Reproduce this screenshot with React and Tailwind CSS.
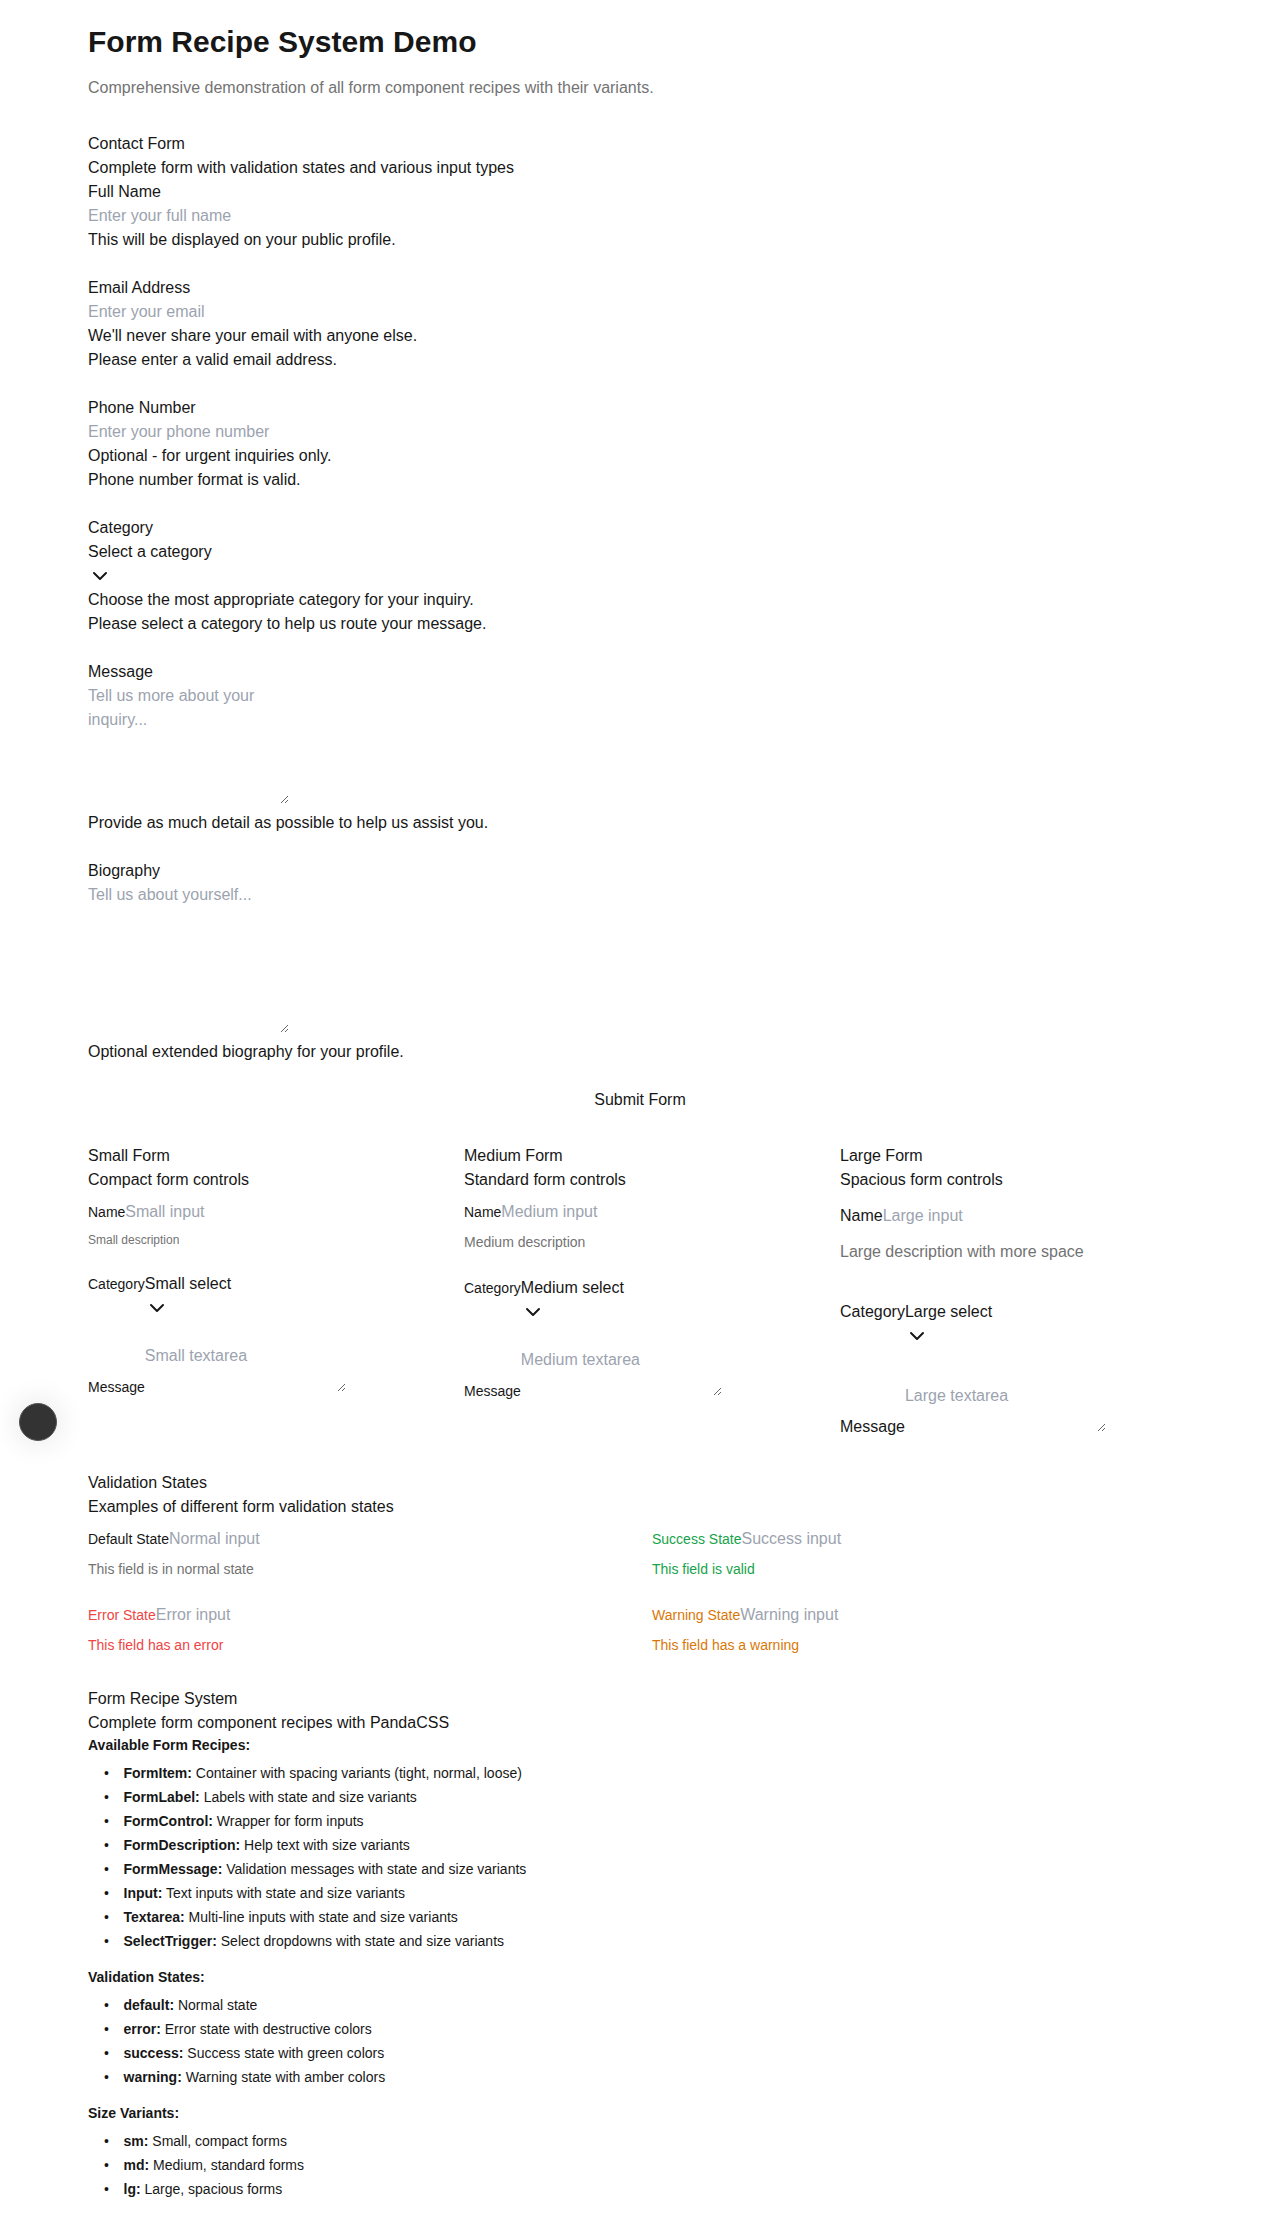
import { ChevronDown } from "lucide-react";

const ph = "outline-none placeholder:text-[#9ca3af]";

function SelectTrigger({ children }) {
  return (
    <button type="button" className="text-left">
      <span>{children}</span>
      <ChevronDown className="block" size={24} />
    </button>
  );
}

function ContactItem({ label, children, description, message }) {
  return (
    <div>
      <label className="block">{label}</label>
      <div>{children}</div>
      {description && <p>{description}</p>}
      {message && <p>{message}</p>}
    </div>
  );
}

function SizeForm({ title, subtitle, size }) {
  const label = size === "lg" ? "text-base" : "text-sm";
  const desc =
    size === "sm" ? "text-xs" : size === "md" ? "text-sm" : "text-base";
  const first = size === "lg" ? "mt-3" : "mt-2";
  const gap = size === "lg" ? "mt-9" : "mt-6";
  const name = size === "sm" ? "Small" : size === "md" ? "Medium" : "Large";
  const descText =
    size === "sm"
      ? "Small description"
      : size === "md"
      ? "Medium description"
      : "Large description with more space";

  return (
    <div>
      <div>{title}</div>
      <div>{subtitle}</div>
      <div className={first}>
        <label className={label}>Name</label>
        <input className={ph} placeholder={`${name} input`} />
        <p className={`${first} ${desc} text-[#737373]`}>{descText}</p>
      </div>
      <div className={gap}>
        <label className={label}>Category</label>
        <SelectTrigger>{name} select</SelectTrigger>
      </div>
      <div className={gap}>
        <label className={label}>Message</label>
        <textarea className={ph} placeholder={`${name} textarea`} />
      </div>
    </div>
  );
}

function StateItem({ label, placeholder, message, tone }) {
  return (
    <div className="space-y-2">
      <div>
        <label className={`text-sm ${tone.label}`}>{label}</label>
        <input className={ph} placeholder={placeholder} />
      </div>
      <p className={`text-sm ${tone.msg}`}>{message}</p>
    </div>
  );
}

const tones = {
  default: { label: "", msg: "text-[#737373]" },
  success: { label: "text-[#16a34a]", msg: "text-[#16a34a]" },
  error: { label: "text-[#ef4444]", msg: "text-[#ef4444]" },
  warning: { label: "text-[#d97706]", msg: "text-[#d97706]" },
};

const recipes = [
  ["FormItem:", "Container with spacing variants (tight, normal, loose)"],
  ["FormLabel:", "Labels with state and size variants"],
  ["FormControl:", "Wrapper for form inputs"],
  ["FormDescription:", "Help text with size variants"],
  ["FormMessage:", "Validation messages with state and size variants"],
  ["Input:", "Text inputs with state and size variants"],
  ["Textarea:", "Multi-line inputs with state and size variants"],
  ["SelectTrigger:", "Select dropdowns with state and size variants"],
];

const states = [
  ["default:", "Normal state"],
  ["error:", "Error state with destructive colors"],
  ["success:", "Success state with green colors"],
  ["warning:", "Warning state with amber colors"],
];

const sizes = [
  ["sm:", "Small, compact forms"],
  ["md:", "Medium, standard forms"],
  ["lg:", "Large, spacious forms"],
];

function List({ items }) {
  return (
    <ul className="mt-2 pl-[16px] space-y-1">
      {items.map(([k, v]) => (
        <li key={k} className="flex">
          <span aria-hidden className="w-[19.5px] shrink-0">•</span>
          <span>
            <strong className="font-bold">{k}</strong> {v}
          </span>
        </li>
      ))}
    </ul>
  );
}

export default function App() {
  return (
    <div className="relative min-h-screen bg-white text-[#171717] font-['Liberation_Sans',Arial,Helvetica,sans-serif]">
      <div className="max-w-6xl mx-auto p-6">
        <h1 className="text-3xl font-bold">Form Recipe System Demo</h1>
        <p className="mt-4 text-[#737373]">
          Comprehensive demonstration of all form component recipes with their variants.
        </p>

        {/* contact form */}
        <section className="mt-8">
          <div>Contact Form</div>
          <div>Complete form with validation states and various input types</div>
          <form className="space-y-6">
            <ContactItem
              label="Full Name"
              description="This will be displayed on your public profile."
            >
              <input className={ph} placeholder="Enter your full name" />
            </ContactItem>
            <ContactItem
              label="Email Address"
              description="We'll never share your email with anyone else."
              message="Please enter a valid email address."
            >
              <input className={ph} placeholder="Enter your email" />
            </ContactItem>
            <ContactItem
              label="Phone Number"
              description="Optional - for urgent inquiries only."
              message="Phone number format is valid."
            >
              <input className={ph} placeholder="Enter your phone number" />
            </ContactItem>
            <ContactItem
              label="Category"
              description="Choose the most appropriate category for your inquiry."
              message="Please select a category to help us route your message."
            >
              <SelectTrigger>Select a category</SelectTrigger>
            </ContactItem>
            <ContactItem
              label="Message"
              description="Provide as much detail as possible to help us assist you."
            >
              <textarea
                className={`h-[120px] ${ph}`}
                placeholder="Tell us more about your inquiry..."
              />
            </ContactItem>
            <ContactItem
              label="Biography"
              description="Optional extended biography for your profile."
            >
              <textarea
                className={`h-[150px] ${ph}`}
                placeholder="Tell us about yourself..."
              />
            </ContactItem>
            <button type="button" className="block w-full text-center">
              Submit Form
            </button>
          </form>
        </section>

        {/* size variants */}
        <section className="mt-8 grid grid-cols-3 gap-6">
          <SizeForm title="Small Form" subtitle="Compact form controls" size="sm" />
          <SizeForm title="Medium Form" subtitle="Standard form controls" size="md" />
          <SizeForm title="Large Form" subtitle="Spacious form controls" size="lg" />
        </section>

        {/* validation states */}
        <section className="mt-8">
          <div>Validation States</div>
          <div>Examples of different form validation states</div>
          <div className="mt-2 grid grid-cols-2 gap-6">
            <StateItem
              label="Default State"
              placeholder="Normal input"
              message="This field is in normal state"
              tone={tones.default}
            />
            <StateItem
              label="Success State"
              placeholder="Success input"
              message="This field is valid"
              tone={tones.success}
            />
            <StateItem
              label="Error State"
              placeholder="Error input"
              message="This field has an error"
              tone={tones.error}
            />
            <StateItem
              label="Warning State"
              placeholder="Warning input"
              message="This field has a warning"
              tone={tones.warning}
            />
          </div>
        </section>

        {/* recipe info */}
        <section className="mt-8">
          <div>Form Recipe System</div>
          <div>Complete form component recipes with PandaCSS</div>
          <div className="text-sm">
            <h4 className="font-bold">Available Form Recipes:</h4>
            <List items={recipes} />
            <h4 className="mt-4 font-bold">Validation States:</h4>
            <List items={states} />
            <h4 className="mt-4 font-bold">Size Variants:</h4>
            <List items={sizes} />
          </div>
        </section>
      </div>

      {/* dev indicator */}
      <div className="absolute left-[19px] top-[1403px] w-[38px] h-[38px] rounded-full bg-[#333] border border-[#555] shadow-[0_0_24px_8px_rgba(0,0,0,0.06)]" />
    </div>
  );
}
